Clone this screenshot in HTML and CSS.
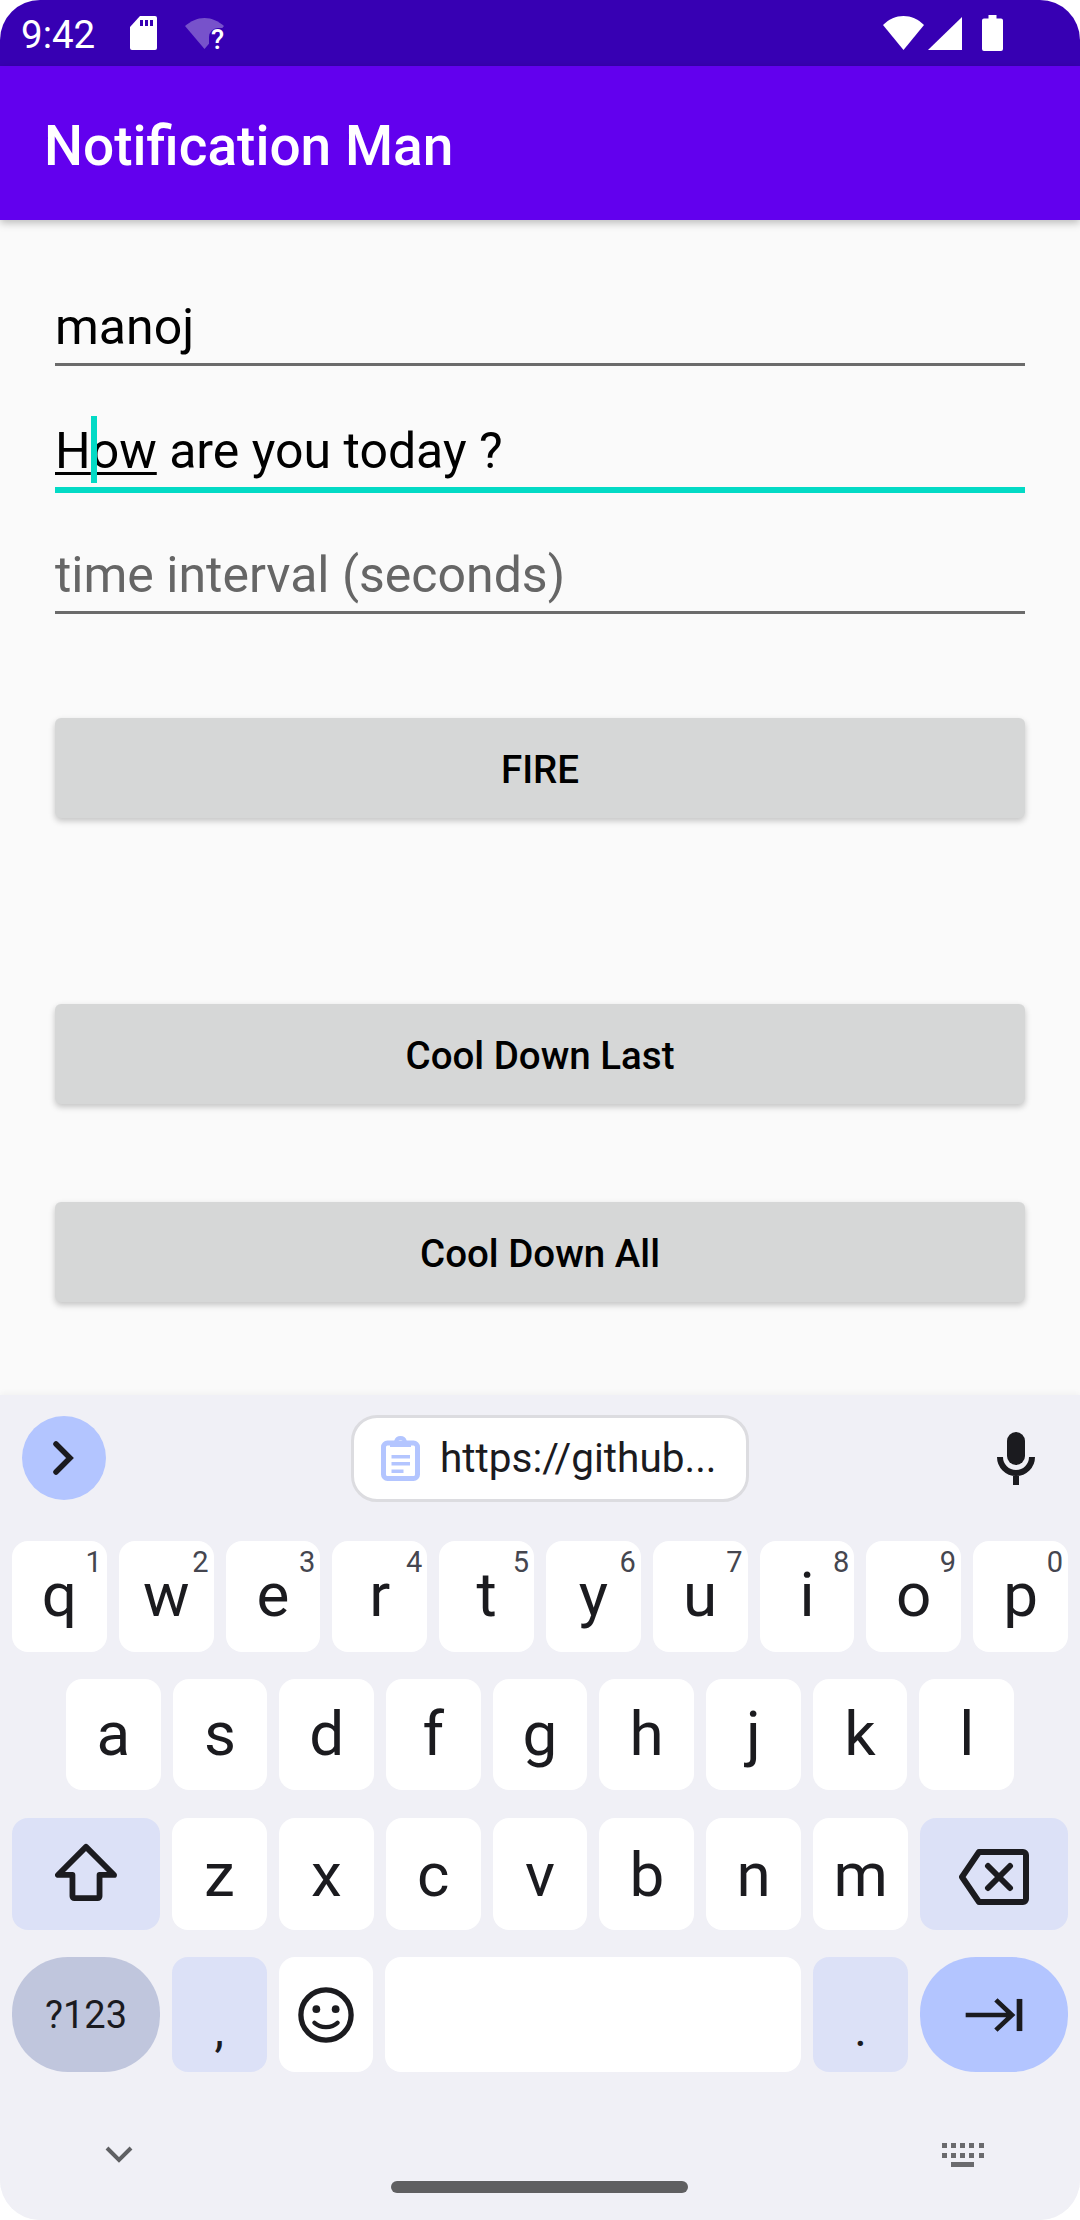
FILE: index.html
```html
<!DOCTYPE html>
<html lang="en">
<head>
  <meta charset="UTF-8" />
  <meta name="viewport" content="width=device-width, initial-scale=1.0" />
  <title>Notification Man</title>
  <link rel="stylesheet" href="styles.css">
</head>
<body>
  <div class="screen">
    <div class="status-bar">
      <span class="clock">9:42</span>
      <svg class="ic-sim" viewBox="0 0 27 34"><path fill="#fff" d="M10 0h15a2 2 0 0 1 2 2v30a2 2 0 0 1-2 2H2a2 2 0 0 1-2-2V11z"/><path fill="#3700b3" d="M10 4h3v6h-3zM15 4h3v6h-3zM20 4h3v6h-3z"/></svg>
      <span class="wifi-q">
        <svg viewBox="0 0 39 31" width="39" height="31"><path fill="#fff" opacity=".32" d="M0 8C6 3 12 0 19.5 0S33 3 39 8L19.5 31z"/><path fill="#3700b3" d="M24 19a9 9 0 0 1 9-9h6v21H24z"/></svg>
        <span class="q">?</span>
      </span>
      <span class="status-gap"></span>
      <svg class="ic-wifi" viewBox="0 0 41 34"><path fill="#fff" d="M0 9C6 3 13 0 20.500 0S35 3 41 9L20.500 34z"/></svg>
      <svg class="ic-signal" viewBox="0 0 34 33"><path fill="#fff" d="M34 0v33H0z"/></svg>
      <svg class="ic-batt" viewBox="0 0 21 36"><path fill="#fff" d="M6.500 0h8v3.500H19a2 2 0 0 1 2 2V34a2 2 0 0 1-2 2H2a2 2 0 0 1-2-2V5.500a2 2 0 0 1 2-2h4.500z"/></svg>
    </div>
    <header class="app-bar">Notification Man</header>

    <main class="content">
      <div class="field"><span class="value">manoj</span></div>
      <div class="field focused">
        <span class="value"><span class="composing">H<span class="caret"></span>ow</span> are you today ?</span>
      </div>
      <div class="field"><span class="value hint">time interval (seconds)</span></div>

      <button class="btn btn-fire">FIRE</button>
      <button class="btn btn-last">Cool Down Last</button>
      <button class="btn btn-all">Cool Down All</button>
    </main>

    <section class="keyboard">
      <div class="kb-tools">
        <span class="expand">
          <svg viewBox="0 0 24 36" width="24" height="36"><path d="M4 4l14 14L4 32" fill="none" stroke="#1b1b1f" stroke-width="5.500" stroke-linecap="round"/></svg>
        </span>
        <span class="clip-chip">
          <svg viewBox="0 0 39 45" width="39" height="45"><rect x="2.500" y="7" width="34" height="35.500" rx="4" fill="none" stroke="#b3c5ff" stroke-width="5"/><path fill="#b3c5ff" fill-rule="evenodd" d="M19.500 0a6.500 6.500 0 0 1 6.300 5H30v6H9V5h4.200a6.500 6.500 0 0 1 6.300-5zm0 4a2.500 2.500 0 1 0 0 5 2.500 2.500 0 0 0 0-5z"/><path fill="#b3c5ff" d="M10.500 19h18.500v3.500H10.500zM10.500 26h18.500v3.500H10.500zM10.500 33.500h12v3.500h-12z"/></svg>
          <span class="clip-text">https://github...</span>
        </span>
        <svg class="ic-mic" viewBox="0 0 38 53" width="38" height="53"><rect x="10" y="0" width="18" height="33" rx="9" fill="#1b1b1f"/><path d="M3 25a16 16 0 0 0 32 0M19 41v12" fill="none" stroke="#1b1b1f" stroke-width="6"/></svg>
      </div>

      <div class="kb-row row-top">
        <span class="key">q<sup>1</sup></span>
        <span class="key">w<sup>2</sup></span>
        <span class="key">e<sup>3</sup></span>
        <span class="key">r<sup>4</sup></span>
        <span class="key">t<sup>5</sup></span>
        <span class="key">y<sup>6</sup></span>
        <span class="key">u<sup>7</sup></span>
        <span class="key">i<sup>8</sup></span>
        <span class="key">o<sup>9</sup></span>
        <span class="key">p<sup>0</sup></span>
      </div>
      <div class="kb-row row-mid">
        <span class="key">a</span>
        <span class="key">s</span>
        <span class="key">d</span>
        <span class="key">f</span>
        <span class="key">g</span>
        <span class="key">h</span>
        <span class="key">j</span>
        <span class="key">k</span>
        <span class="key">l</span>
      </div>
      <div class="kb-row row-shift">
        <span class="key mod wide">
          <svg class="ic-shift" viewBox="0 0 64 62" width="62" height="60"><path d="M32 4L3 33h15v22a2 2 0 0 0 2 2h24a2 2 0 0 0 2-2V33h15z" fill="none" stroke="#1b1b1f" stroke-width="6" stroke-linejoin="round"/></svg>
        </span>
        <span class="key">z</span>
        <span class="key">x</span>
        <span class="key">c</span>
        <span class="key">v</span>
        <span class="key">b</span>
        <span class="key">n</span>
        <span class="key">m</span>
        <span class="key mod wide">
          <svg class="ic-back" viewBox="0 0 70 56" width="70" height="56"><path d="M20 3h44a3 3 0 0 1 3 3v44a3 3 0 0 1-3 3H20L3 28zM29 17l22 22M51 17L29 39" fill="none" stroke="#1b1b1f" stroke-width="6" stroke-linejoin="round" stroke-linecap="round"/></svg>
        </span>
      </div>
      <div class="kb-row row-bottom">
        <span class="key sym wide">?123</span>
        <span class="key mod punct">,</span>
        <span class="key">
          <svg viewBox="0 0 58 58" width="56" height="56"><circle cx="29" cy="29" r="26" fill="none" stroke="#1b1b1f" stroke-width="5.500"/><circle cx="19" cy="23" r="4" fill="#1b1b1f"/><circle cx="39" cy="23" r="4" fill="#1b1b1f"/><path d="M17 37c6 6 18 6 24 0" fill="none" stroke="#1b1b1f" stroke-width="4.500" stroke-linecap="round"/></svg>
        </span>
        <span class="key space"></span>
        <span class="key mod punct">.</span>
        <span class="key enter wide">
          <svg viewBox="0 0 60 36" width="58" height="34"><path d="M0 18h50M32 2l17 16-17 16" fill="none" stroke="#1b1b1f" stroke-width="5"/><path d="M54 1h6v34h-6z" fill="#1b1b1f"/></svg>
        </span>
      </div>

      <div class="kb-nav">
        <svg class="ic-down" viewBox="0 0 28 18" width="28" height="18"><path d="M2 2l12 12L26 2" fill="none" stroke="#5f6063" stroke-width="4"/></svg>
        <span class="home-bar"></span>
        <svg class="ic-kbd" viewBox="0 0 42 24" width="42" height="24"><path fill="#6a6a6d" d="M0 0h5v5H0zM9 0h5v5H9zM18 0h5v5h-5zM27 0h5v5h-5zM37 0h5v5h-5zM0 10h5v5H0zM9 10h5v5H9zM18 10h5v5h-5zM27 10h5v5h-5zM37 10h5v5h-5zM9 19h23v5H9z"/></svg>
      </div>
    </section>
  </div>
</body>
</html>
```

FILE: styles.css
```css
* {
  box-sizing: border-box;
}
body {
  margin: 0;
  background: #fff;
  font-family: Roboto, sans-serif;
}
.screen {
  width: 1080px;
  height: 2220px;
  border-radius: 40px;
  overflow: hidden;
  display: flex;
  flex-direction: column;
  background: #fafafa;
}

/* status + app bar */
.status-bar {
  height: 66px;
  flex: none;
  background: #3700b3;
  display: flex;
  align-items: center;
  padding: 0 77px 0 21px;
  color: #fff;
}
.clock {
  width: 109px;
  font-size: 38.500px;
  position: relative;
  top: 1px;
}
.ic-sim {
  width: 27px;
  height: 34px;
  margin-right: 28px;
}
.wifi-q {
  width: 39px;
  height: 31px;
  position: relative;
}
.wifi-q svg {
  display: block;
}
.q {
  position: absolute;
  left: 26px;
  top: 9px;
  font-size: 27px;
  font-weight: 500;
  line-height: 27px;
}
.status-gap {
  flex: 1;
}
.ic-wifi {
  width: 41px;
  height: 34px;
  margin-right: 4px;
}
.ic-signal {
  width: 34px;
  height: 33px;
  margin-right: 20px;
}
.ic-batt {
  width: 21px;
  height: 36px;
}
.app-bar {
  height: 154px;
  flex: none;
  background: #6200ee;
  color: #fff;
  font-size: 55px;
  font-weight: 500;
  display: flex;
  align-items: center;
  padding: 6px 0 0 44px;
  box-shadow: 0 3px 8px rgba(0, 0, 0, 0.25);
  position: relative;
}

/* form */
.content {
  flex: 1;
  padding: 62px 55px 0 55px;
}
.field {
  height: 84px;
  margin-bottom: 40px;
  border-bottom: 3px solid #6b6b6b;
  display: flex;
  align-items: flex-end;
  padding-bottom: 7px;
  font-size: 50px;
  line-height: 58px;
  color: #000;
}
.field.focused {
  height: 87px;
  margin-bottom: 37px;
  border-bottom: 6px solid #03dac5;
}
.hint {
  color: #666;
}
.composing {
  position: relative;
  text-decoration: underline;
  text-decoration-thickness: 3px;
  text-underline-offset: 4px;
}
.caret {
  position: absolute;
  top: -6px;
  width: 6px;
  height: 67px;
  background: #03dac5;
}
.btn {
  display: block;
  width: 100%;
  height: 100px;
  border: none;
  border-radius: 6px;
  padding-top: 4px;
  background: #d6d7d7;
  color: #000;
  font-family: Roboto, sans-serif;
  font-size: 38.500px;
  font-weight: 500;
  box-shadow: 0 3px 6px rgba(0, 0, 0, 0.22);
}
.btn-fire {
  margin-top: 104px;
}
.btn-last {
  margin-top: 186px;
}
.btn-all {
  margin-top: 98px;
}

/* keyboard */
.keyboard {
  height: 825px;
  flex: none;
  background: #f0f0f6;
  box-shadow: 0 -2px 6px rgba(0, 0, 0, 0.04);
  padding: 0 12px;
  display: flex;
  flex-direction: column;
}
.kb-tools {
  height: 146px;
  flex: none;
  display: flex;
  align-items: center;
  padding: 0 33px 20px 10px;
}
.expand {
  width: 84px;
  height: 84px;
  border-radius: 50%;
  background: #b3c5ff;
  display: flex;
  align-items: center;
  justify-content: center;
}
.clip-chip {
  width: 398px;
  height: 87px;
  margin-left: 245px;
  margin-right: auto;
  border: 3px solid #dcdce0;
  border-radius: 26px;
  background: #fff;
  display: flex;
  align-items: center;
  gap: 20px;
  padding-left: 27px;
  font-size: 40.500px;
  color: #1b1b1f;
}
.kb-row {
  display: flex;
  gap: 12px;
  height: 111px;
  flex: none;
  margin-bottom: 27px;
}
.row-top .key {
  padding-bottom: 5px;
}
.row-mid {
  padding: 0 54px;
  margin-bottom: 28px;
}
.row-mid .key {
  padding-bottom: 3px;
}
.row-shift {
  height: 112px;
}
.row-bottom {
  height: 115px;
  margin-bottom: 0;
}
.key {
  flex: 1;
  position: relative;
  display: flex;
  align-items: center;
  justify-content: center;
  background: #fff;
  border-radius: 16px;
  color: #1b1b1f;
  font-size: 62px;
}
.key sup {
  position: absolute;
  top: 4px;
  right: 5px;
  font-size: 29px;
  line-height: 34px;
  color: #45464f;
}
.key svg {
  flex: none;
}
.ic-shift {
  margin-top: -3px;
}
.ic-back {
  margin-top: 5px;
}
.wide {
  flex: none;
  width: 148px;
}
.mod {
  background: #dce1f7;
}
.punct {
  font-size: 48px;
  padding-top: 30px;
}
.sym {
  background: #c0c6dd;
  border-radius: 56px;
  font-size: 38px;
}
.enter {
  background: #b3c5ff;
  border-radius: 56px;
}
.space {
  flex: none;
  width: 416px;
}
.kb-nav {
  flex: 1;
  position: relative;
}
.ic-down {
  position: absolute;
  left: 93px;
  top: 74px;
}
.home-bar {
  position: absolute;
  left: 379px;
  top: 109px;
  width: 297px;
  height: 12px;
  border-radius: 6px;
  background: #5f5f61;
}
.ic-kbd {
  position: absolute;
  left: 930px;
  top: 71px;
}
```
